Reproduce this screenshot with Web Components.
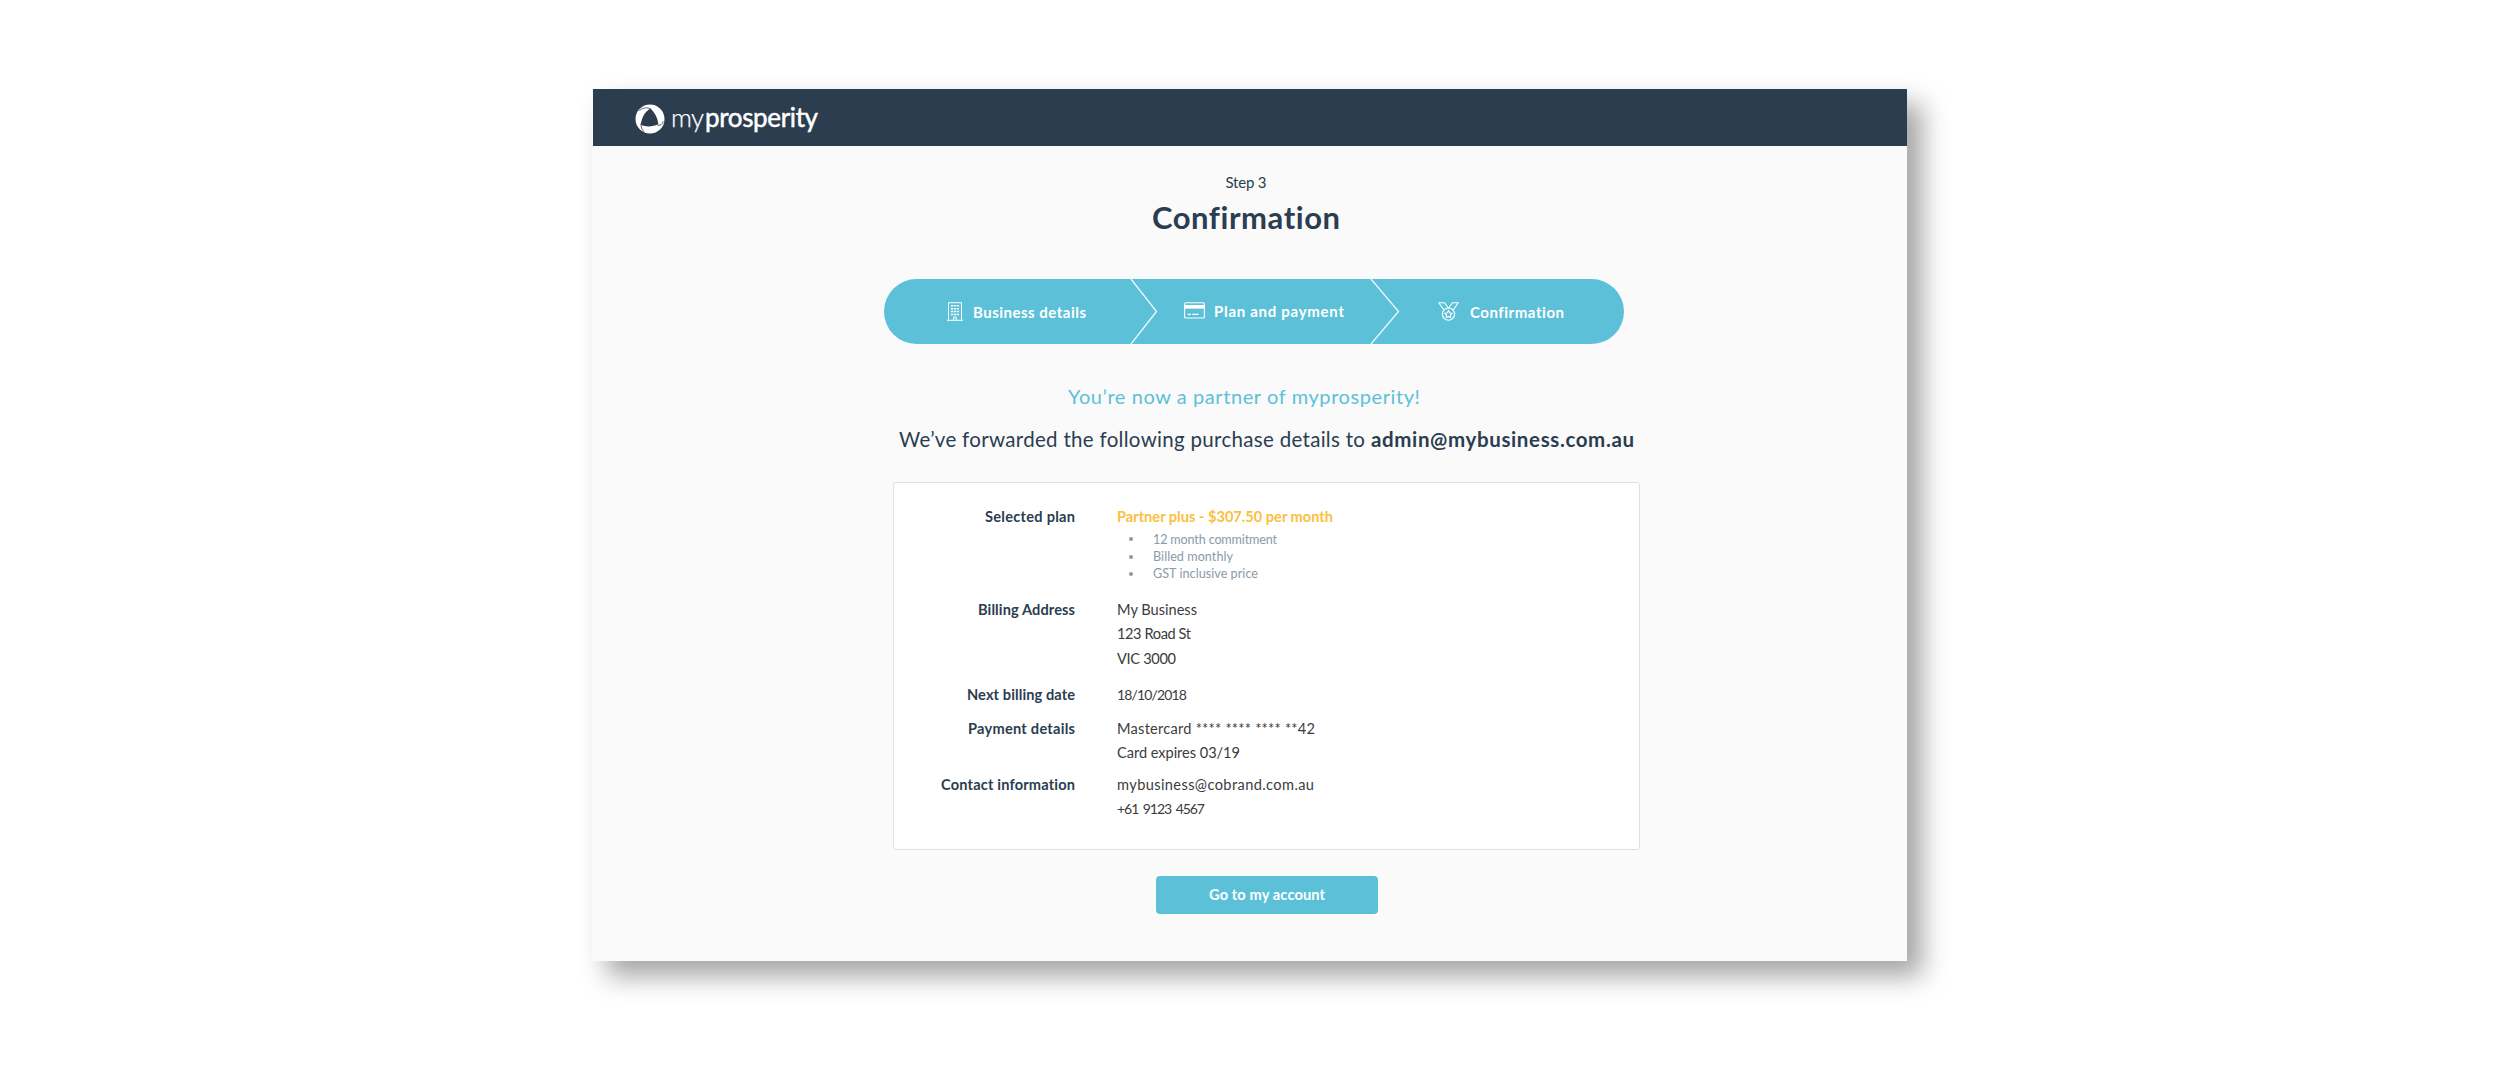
<!DOCTYPE html>
<html lang="en">
<head>
<meta charset="utf-8">
<title>myprosperity</title>
<style>
body {
  box-sizing: border-box;
  min-height: 1088px;
  margin: 0;
  padding: 89px 0 0 592px;
  background: #fff;
  font-family: Lato, "Open Sans", sans-serif;
  color: #2b3d50;
}
</style>
</head>
<body>
<app-window>
  <brand-logo slot="header"></brand-logo>
  <page-heading></page-heading>
  <step-bar></step-bar>
  <thank-you></thank-you>
  <order-details></order-details>
  <action-button><fit-text width="116">Go to my account</fit-text></action-button>
</app-window>

<script>
// a single line of text, tracked out to a given width
class FitText extends HTMLElement {
  constructor() {
    super();
    this.attachShadow({ mode: "open" });
    this.shadowRoot.innerHTML = `
<style>
:host { display: inline-block; white-space: nowrap; }
span { display: inline-block; }
</style>
<span><slot></slot></span>`;
  }
  connectedCallback() {
    const span = this.shadowRoot.querySelector("span");
    const target = Number(this.getAttribute("width"));
    const count = this.textContent.length;
    if (!target || count < 2) return;
    span.style.fontVariantLigatures = "none";
    const natural = span.getBoundingClientRect().width;
    const gap = (target - natural) / (count - 1);
    span.style.letterSpacing = gap + "px";
    span.style.marginRight = -gap + "px";
  }
}

class AppWindow extends HTMLElement {
  constructor() {
    super();
    this.attachShadow({ mode: "open" });
    this.shadowRoot.innerHTML = `
<style>
:host {
  display: flex;
  flex-direction: column;
  box-sizing: border-box;
  width: 1315px;
  height: 872px;
  background: #fafafa;
  box-shadow: 15px 15px 25px rgba(0, 0, 0, .36);
}
header {
  display: flex;
  align-items: center;
  box-sizing: border-box;
  height: 57px;
  margin-left: 1px;
  padding: 0 0 1px 42px;
  background: #2c3d4f;
}
main { display: flex; flex-direction: column; align-items: flex-start; }
</style>
<header><slot name="header"></slot></header>
<main><slot></slot></main>`;
  }
}

class BrandLogo extends HTMLElement {
  constructor() {
    super();
    this.attachShadow({ mode: "open" });
    this.shadowRoot.innerHTML = `
<style>
:host { display: flex; align-items: center; gap: 6px; color: #fff; font-size: 26px; line-height: 36px; }
svg { display: block; margin-top: 3px; }
.name { display: flex; gap: 1px; margin-top: -1px; }
.my { font-weight: 300; -webkit-text-stroke: .25px #fff; }
.rest { font-weight: 400; -webkit-text-stroke: .5px #fff; }
</style>
<svg width="30" height="30" viewBox="0 0 30 30">
  <circle cx="15" cy="15" r="14.5" fill="#fff"/>
  <path d="M15.2 4.6C19.5 8 22.4 13.5 23.4 20.3C17 23 10.8 23 5.8 20.8C6.5 14 9.8 8 15.2 4.6Z" fill="#2c3d4f"/>
  <path d="M4.2 6.7C8 3.4 12.5 3 16 5.2M28.3 17.3C27.6 20 25.6 21.5 22.6 21.4M6 19.5C5.8 23.2 7 26.1 9.5 28" fill="none" stroke="#2c3d4f" stroke-width=".8"/>
</svg>
<div class="name"><fit-text class="my" width="33">my</fit-text><fit-text class="rest" width="113">prosperity</fit-text></div>`;
  }
}

class PageHeading extends HTMLElement {
  constructor() {
    super();
    this.attachShadow({ mode: "open" });
    this.shadowRoot.innerHTML = `
<style>
:host { display: flex; flex-direction: column; align-items: center; width: 188px; margin: 26px 0 0 560px; }
p { margin: 0; font-size: 15px; line-height: 20px; }
h1 { margin: 5px 0 0; font-size: 31px; line-height: 40px; font-weight: 700; }
</style>
<p><fit-text width="41">Step 3</fit-text></p>
<h1><fit-text width="188">Confirmation</fit-text></h1>`;
  }
}

const icons = {
  building: `<svg width="16" height="19" viewBox="0 0 16 19" fill="none" stroke="#fff">
    <path d="M0 18.3H16M1.5 18V.7H14.5V18M6.7 18V15H9.3V18"/>
    <path d="M3.9 3.8H6.3M3.9 6.7H6.3M3.9 9.6H6.3M3.9 12.5H6.3M9.7 3.8H12.1M9.7 6.7H12.1M9.7 9.6H12.1M9.7 12.5H12.1M7 3.8H9M7 6.7H9M7 9.6H9M7 12.5H9" stroke-width="1.5"/>
  </svg>`,
  card: `<svg width="21" height="17" viewBox="0 0 21 17" fill="none" stroke="#fff">
    <rect x=".6" y=".8" width="19.8" height="15.2" rx="1.3" stroke-width="1.1"/>
    <path d="M.6 4.8H20.4" stroke-width="3.6"/>
    <path d="M3.7 12.4H7M8.3 12.4H14.5" stroke-width="1.1"/>
  </svg>`,
  medal: `<svg width="21" height="19" viewBox="0 0 21 19" fill="none" stroke="#fff" stroke-linejoin="round">
    <path d="M5.7 7.6L.7.8H6.5L10.5 6.3L14.5.8H20.3L15.3 7.6" stroke-width="1.05"/>
    <circle cx="10.5" cy="12.1" r="6.1" stroke-width="1.15"/>
    <path d="M10.5 8.5L11.7 10.7L14.1 11.2L12.5 13.1L12.7 15.4L10.5 14.5L8.3 15.4L8.5 13.1L6.9 11.2L9.3 10.7Z" stroke-width="1.1"/>
  </svg>`
};

class StepItem extends HTMLElement {
  constructor() {
    super();
    this.attachShadow({ mode: "open" });
    this.shadowRoot.innerHTML = `
<style>
:host {
  display: flex;
  align-items: center;
  box-sizing: border-box;
  color: #fff;
  font-size: 15px;
  font-weight: 700;
  line-height: 20px;
}
svg { display: block; }
</style>
${icons[this.getAttribute("icon")]}<slot></slot>`;
  }
}

class StepBar extends HTMLElement {
  constructor() {
    super();
    this.attachShadow({ mode: "open" });
    this.shadowRoot.innerHTML = `
<style>
:host {
  display: flex;
  width: 740px;
  height: 65px;
  margin: 42px 0 0 292px;
  border-radius: 33px;
  background: #5cc1d8;
}
svg { display: block; flex: none; }
.first { width: 246px; padding-left: 63px; gap: 10px; }
.second { width: 212px; padding: 0 0 2px 26px; gap: 9px; }
.third { padding-left: 38px; gap: 11px; }
</style>
<step-item class="first" icon="building"><fit-text width="113">Business details</fit-text></step-item>
<svg width="28" height="65"><path d="M1 0L26.5 32.5L1 65" fill="none" stroke="#e9f7fa" stroke-width="1.4"/></svg>
<step-item class="second" icon="card"><fit-text width="130">Plan and payment</fit-text></step-item>
<svg width="30" height="65"><path d="M1 0L28.5 32.5L1 65" fill="none" stroke="#e9f7fa" stroke-width="1.4"/></svg>
<step-item class="third" icon="medal"><fit-text width="94">Confirmation</fit-text></step-item>`;
  }
}

class ThankYou extends HTMLElement {
  constructor() {
    super();
    this.attachShadow({ mode: "open" });
    this.shadowRoot.innerHTML = `
<style>
:host { display: block; margin: 38px 0 0 307px; }
p { margin: 0; line-height: 28px; }
.lead { padding-left: 169px; font-size: 20px; color: #5cc1d8; }
.sent { display: flex; gap: 6px; margin-top: 15px; font-size: 20.5px; }
</style>
<p class="lead"><fit-text width="352">You’re now a partner of myprosperity!</fit-text></p>
<p class="sent"><fit-text width="466">We’ve forwarded the following purchase details to</fit-text>
<b><fit-text width="263">admin@mybusiness.com.au</fit-text></b></p>`;
  }
}

class DetailRow extends HTMLElement {
  constructor() {
    super();
    this.attachShadow({ mode: "open" });
    this.shadowRoot.innerHTML = `
<style>
:host {
  display: grid;
  grid-template-columns: 181px 1fr;
  column-gap: 42px;
  font-size: 14.6px;
  line-height: 24.5px;
}
.label { text-align: right; font-weight: 700; }
.value { display: flex; flex-direction: column; align-items: flex-start; color: #3c3c3c; }
</style>
<div class="label"><slot name="label"></slot></div>
<div class="value"><slot></slot></div>`;
  }
}

class OrderDetails extends HTMLElement {
  constructor() {
    super();
    this.attachShadow({ mode: "open" });
    this.shadowRoot.innerHTML = `
<style>
:host {
  display: flex;
  flex-direction: column;
  box-sizing: border-box;
  width: 747px;
  height: 368px;
  margin: 29px 0 0 301px;
  padding-top: 22px;
  border: 1px solid #dde1e4;
  border-radius: 3px;
  background: #fff;
}
.plan { font-weight: 700; color: #fbc03d; }
.num { font-size: 14px; word-spacing: 2px; }
ul { margin: 1px 0 0; padding: 0; list-style: none; font-size: 12.6px; line-height: 17.4px; color: #8c9aa7; }
li { display: flex; align-items: center; gap: 21px; padding-left: 12px; }
li::before { content: ""; width: 4px; height: 4px; margin-right: -1px; border-radius: 50%; background: #8c9aa7; }
</style>
<detail-row>
  <fit-text slot="label" width="90">Selected plan</fit-text>
  <fit-text class="plan" width="216">Partner plus - $307.50 per month</fit-text>
  <ul>
    <li><fit-text width="124">12 month commitment</fit-text></li>
    <li><fit-text width="80">Billed monthly</fit-text></li>
    <li><fit-text width="105">GST inclusive price</fit-text></li>
  </ul>
</detail-row>
<detail-row style="margin-top: 15px">
  <fit-text slot="label" width="97">Billing Address</fit-text>
  <fit-text width="80">My Business</fit-text>
  <fit-text width="74">123 Road St</fit-text>
  <fit-text width="59">VIC 3000</fit-text>
</detail-row>
<detail-row style="margin-top: 12px">
  <fit-text slot="label" width="108">Next billing date</fit-text>
  <fit-text class="num" width="70">18/10/2018</fit-text>
</detail-row>
<detail-row style="margin-top: 9px">
  <fit-text slot="label" width="107">Payment details</fit-text>
  <fit-text width="198">Mastercard **** **** **** **42</fit-text>
  <fit-text width="123">Card expires 03/19</fit-text>
</detail-row>
<detail-row style="margin-top: 7px">
  <fit-text slot="label" width="134">Contact information</fit-text>
  <fit-text width="197">mybusiness@cobrand.com.au</fit-text>
  <fit-text class="num" width="88">+61 9123 4567</fit-text>
</detail-row>`;
  }
}

class ActionButton extends HTMLElement {
  constructor() {
    super();
    this.attachShadow({ mode: "open" });
    this.shadowRoot.innerHTML = `
<style>
:host { display: block; margin: 26px 0 0 564px; }
button {
  display: flex;
  justify-content: center;
  align-items: center;
  width: 222px;
  height: 38px;
  padding: 0;
  border: 0;
  border-radius: 4px;
  background: #5cc1d8;
  color: #fff;
  font: 700 14.6px/20px Lato, sans-serif;
}
</style>
<button><slot></slot></button>`;
  }
}

// fit-text goes last so that it measures with the final inherited font
window.customElements.define("app-window", AppWindow);
window.customElements.define("brand-logo", BrandLogo);
window.customElements.define("page-heading", PageHeading);
window.customElements.define("step-item", StepItem);
window.customElements.define("step-bar", StepBar);
window.customElements.define("thank-you", ThankYou);
window.customElements.define("detail-row", DetailRow);
window.customElements.define("order-details", OrderDetails);
window.customElements.define("action-button", ActionButton);
window.customElements.define("fit-text", FitText);
</script>
</body>
</html>
